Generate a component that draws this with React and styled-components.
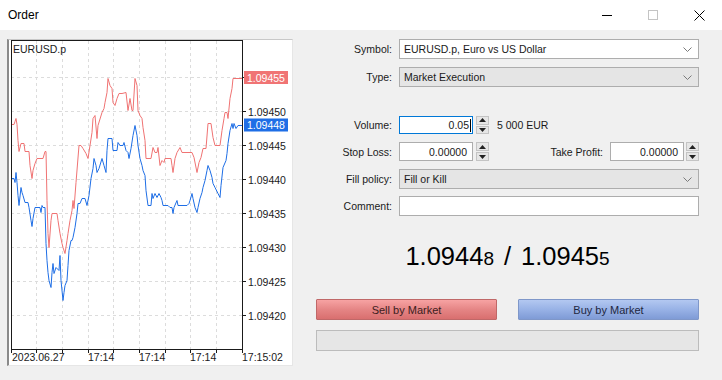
import React from "react";
import styled, { createGlobalStyle } from "styled-components";

const Global = createGlobalStyle`
  html, body { margin: 0; padding: 0; background: #f0f0f0; }
  body { font-family: "Liberation Sans", Arial, sans-serif; }
`;

const Window = styled.div`
  width: 722px;
  height: 380px;
  background: #f0f0f0;
  display: flex;
  flex-direction: column;
  overflow: hidden;
  font-family: "Liberation Sans", Arial, sans-serif;
  font-size: 10.5px;
  color: #1a1a1a;
`;

const TitleBar = styled.div`
  height: 30px;
  background: #ffffff;
  display: flex;
  align-items: center;
  padding-left: 8px;
  flex-shrink: 0;
`;

const Title = styled.div`
  font-size: 12px;
  color: #000;
  flex: 1;
`;

const WinButton = styled.div`
  width: 46px;
  height: 30px;
  display: flex;
  align-items: center;
  justify-content: center;
`;

const Body = styled.div`
  display: flex;
  flex: 1;
  padding: 9px 0 0 7px;
`;

const ChartPanel = styled.div`
  width: 286px;
  height: 327px;
  background: #ffffff;
  box-sizing: border-box;
  border-left: 2px solid #8a8a8a;
  border-top: 1px solid #c8c8c8;
  border-right: 1px solid #e6e6e6;
  border-bottom: 1px solid #e6e6e6;
  flex-shrink: 0;
  overflow: hidden;
`;

const ChartSvg = styled.svg`
  display: block;
  margin-left: -2px;
  margin-top: -1px;
`;

const Side = styled.div`
  display: flex;
  flex-direction: column;
  padding-left: 7px;
`;

const Row = styled.div`
  display: flex;
  align-items: center;
  height: ${(p) => p.$h || 20}px;
  margin-top: ${(p) => p.$mt || 0}px;
`;

const Label = styled.div`
  width: ${(p) => p.$w || 92}px;
  text-align: right;
  margin-right: 7px;
  color: #1a1a1a;
  white-space: nowrap;
`;

const Combo = styled.div`
  width: 300px;
  height: 100%;
  box-sizing: border-box;
  border: 1px solid #adadad;
  background: ${(p) => (p.$gray ? "#e5e5e5" : "#ffffff")};
  display: flex;
  align-items: center;
  padding-left: 4px;
  padding-right: 6px;
`;

const ComboText = styled.div`
  flex: 1;
`;

const TextInput = styled.div`
  width: 300px;
  height: 100%;
  box-sizing: border-box;
  border: 1px solid #adadad;
  background: #fff;
`;

const NumInput = styled.div`
  width: 74px;
  height: 100%;
  box-sizing: border-box;
  border: 1px solid ${(p) => (p.$focus ? "#0078d7" : "#adadad")};
  background: #fff;
  display: flex;
  align-items: center;
  justify-content: flex-end;
  padding-right: ${(p) => (p.$focus ? 1 : 5)}px;
`;

const Caret = styled.span`
  display: inline-block;
  width: 1px;
  height: 13px;
  background: #000;
  margin-left: 1px;
`;

const Spinner = styled.div`
  width: 13px;
  height: 100%;
  margin-left: ${(p) => p.$ml ?? 3}px;
  display: flex;
  flex-direction: column;
  gap: 1px;
`;

const SpinBtn = styled.div`
  flex: 1;
  box-sizing: border-box;
  border: 1px solid #c4c4c4;
  background: #e6e6e6;
  display: flex;
  align-items: center;
  justify-content: center;
`;

const Note = styled.div`
  margin-left: 8px;
`;

const Spacer = styled.div`
  flex: 1;
`;

const Bottom = styled.div`
  margin-left: 16px;
  width: 383px;
  display: flex;
  flex-direction: column;
`;

const Quote = styled.div`
  margin-top: 27px;
  height: 26px;
  display: flex;
  justify-content: center;
  align-items: baseline;
  font-size: 25.5px;
  color: #000;
  line-height: 26px;
`;

const Small = styled.span`
  font-size: 19px;
`;

const Sep = styled.span`
  margin: 0 10px;
`;

const Buttons = styled.div`
  display: flex;
  justify-content: space-between;
  margin-top: 30px;
`;

const MarketButton = styled.div`
  width: 181px;
  height: 21px;
  box-sizing: border-box;
  display: flex;
  align-items: center;
  justify-content: center;
  font-size: 11px;
  border: 1px solid ${(p) => (p.$sell ? "#c06868" : "#7f97c9")};
  background: ${(p) =>
    p.$sell
      ? "linear-gradient(#f7a3a3, #e58585 50%, #d96f6f)"
      : "linear-gradient(#b3c8f1, #98b2e6 50%, #7f9bd6)"};
  color: ${(p) => (p.$sell ? "#3b2020" : "#1f2740")};
  border-radius: 1px;
`;

const Progress = styled.div`
  margin-top: 10px;
  height: 21px;
  box-sizing: border-box;
  border: 1px solid #bcbcbc;
  background: #e6e6e6;
`;

const Chevron = () => (
  <svg width="9" height="5" viewBox="0 0 9 5">
    <polyline points="0.5,0.5 4.5,4.5 8.5,0.5" fill="none" stroke="#7a7a7a" strokeWidth="1" />
  </svg>
);

const Up = () => (
  <svg width="7" height="4" viewBox="0 0 7 4">
    <polygon points="0,4 3.5,0 7,4" fill="#222" />
  </svg>
);
const Down = () => (
  <svg width="7" height="4" viewBox="0 0 7 4">
    <polygon points="0,0 3.5,4 7,0" fill="#222" />
  </svg>
);

const SpinBox = ({ ml }) => (
  <Spinner $ml={ml}>
    <SpinBtn>
      <Up />
    </SpinBtn>
    <SpinBtn>
      <Down />
    </SpinBtn>
  </Spinner>
);

const red = [
  [11,124],[14,124],[15,121],[16,118],[17,124],[18,140],[19,151],[21,143],[24,143],[25,151],[29,151],[30,165],[32,178],[33,170],[35,163],[37,158],[43,158],[45,151],[46,151],[47,200],[48,233],[49,247],[51,220],[52,213],[57,213],[58,220],[60,233],[62,243],[63,247],[65,253],[67,240],[68,233],[70,220],[72,210],[73,200],[74,208],[76,182],[79,145],[81,145],[83,148],[86,153],[88,158],[90,145],[92,132],[93,118],[95,115],[97,138],[98,125],[102,112],[104,108],[105,102],[107,92],[108,78],[110,85],[112,88],[113,102],[115,105],[117,98],[119,93],[122,93],[126,92],[128,110],[130,98],[132,110],[133,110],[135,78],[137,85],[138,110],[140,115],[142,118],[143,127],[145,140],[146,158],[151,158],[153,147],[155,152],[157,152],[158,147],[160,165],[162,160],[164,162],[165,158],[171,158],[172,165],[173,172],[175,158],[177,152],[180,147],[182,152],[192,152],[194,157],[197,172],[199,162],[201,157],[203,148],[206,148],[208,123],[211,123],[213,137],[215,145],[220,145],[222,130],[224,118],[225,112],[227,112],[228,118],[230,98],[232,88],[233,78],[242,78]
];

const blue = [
  [11,178],[14,178],[15,182],[16,172],[17,182],[18,195],[19,205],[21,187],[22,192],[23,195],[25,202],[28,202],[29,207],[31,220],[32,226],[33,218],[35,207],[40,207],[41,212],[42,205],[43,207],[45,207],[46,243],[47,260],[48,272],[49,280],[51,287],[52,272],[53,263],[54,273],[56,267],[59,270],[60,255],[61,280],[63,300],[64,292],[65,285],[67,280],[68,265],[69,250],[71,240],[72,240],[73,237],[75,227],[77,213],[78,203],[80,203],[82,198],[85,198],[87,205],[89,195],[91,178],[93,168],[94,158],[96,165],[97,172],[99,168],[102,158],[104,165],[106,172],[107,150],[108,138],[112,138],[113,150],[117,150],[118,142],[120,145],[123,145],[124,142],[126,150],[128,152],[129,158],[131,148],[133,135],[135,125],[137,135],[138,145],[140,158],[142,165],[143,170],[145,175],[146,190],[148,205],[151,205],[152,193],[153,198],[155,193],[157,197],[159,193],[161,197],[162,200],[163,205],[168,205],[170,207],[172,207],[173,213],[174,207],[177,200],[178,205],[187,205],[189,203],[190,200],[192,193],[193,198],[195,207],[197,212],[198,207],[200,198],[202,192],[203,187],[205,180],[207,170],[208,165],[210,170],[212,177],[213,183],[215,187],[218,193],[220,197],[221,185],[223,167],[226,160],[227,153],[228,143],[230,130],[232,123],[233,128],[234,123],[236,128],[238,125],[242,125]
];

const levels = [
  { p: "1.09450", y: 111.5 },
  { p: "1.09445", y: 145.5 },
  { p: "1.09440", y: 179.5 },
  { p: "1.09435", y: 213.5 },
  { p: "1.09430", y: 247.5 },
  { p: "1.09425", y: 281.5 },
  { p: "1.09420", y: 315.5 },
];
const vx = [36.5, 62.5, 88.5, 113.5, 139.5, 165.5, 190.5, 216.5];
const times = [
  { t: "2023.06.27", x: 12 },
  { t: "17:14", x: 88 },
  { t: "17:14", x: 139 },
  { t: "17:14", x: 190 },
  { t: "17:15:02", x: 242 },
];

const toPts = (a) => a.map(([x, y]) => `${x},${y + 0.5}`).join(" ");

const Chart = () => (
  <ChartSvg width="288" height="328" viewBox="7 39 288 328">
    <g fontFamily="Liberation Sans, Arial, sans-serif" fontSize="10.5" fill="#1a1a1a">
      {[77.5, ...levels.map((l) => l.y)].map((y) => (
        <line key={y} x1="11" x2="242" y1={y} y2={y} stroke="#dcdcdc" strokeDasharray="3 3" />
      ))}
      {vx.map((x) => (
        <line key={x} x1={x} x2={x} y1="41" y2="349" stroke="#dcdcdc" strokeDasharray="3 3" />
      ))}
      <polyline points={toPts(red)} fill="none" stroke="#f07373" strokeWidth="1" />
      <polyline points={toPts(blue)} fill="none" stroke="#1e6ee6" strokeWidth="1" />
      <rect x="11.5" y="40.5" width="231" height="309" fill="none" stroke="#1a1a1a" strokeWidth="1" />
      {[77.5, ...levels.map((l) => l.y)].map((y) => (
        <line key={"t" + y} x1="242" x2="246" y1={y} y2={y} stroke="#1a1a1a" />
      ))}
      {[11.5, ...vx, 242.5].map((x) => (
        <line key={"b" + x} x1={x} x2={x} y1="349" y2="353" stroke="#1a1a1a" />
      ))}
      {levels.map((l) => (
        <text key={l.p} x="248" y={l.y + 4}>{l.p}</text>
      ))}
      <rect x="244" y="71" width="44" height="13" fill="#f07474" />
      <text x="247" y="81.5" fill="#ffffff">1.09455</text>
      <rect x="244" y="118.5" width="44" height="13" fill="#1e6ee6" />
      <text x="247" y="129" fill="#ffffff">1.09448</text>
      {times.map((t, i) => (
        <text key={i} x={t.x} y="361">{t.t}</text>
      ))}
      <text x="13" y="53">EURUSD.p</text>
    </g>
  </ChartSvg>
);

export default function App() {
  return (
    <Window>
      <Global />
      <TitleBar>
        <Title>Order</Title>
        <WinButton>
          <svg width="10" height="10" viewBox="0 0 10 10">
            <line x1="0" x2="10" y1="5.5" y2="5.5" stroke="#000" />
          </svg>
        </WinButton>
        <WinButton>
          <svg width="10" height="10" viewBox="0 0 10 10">
            <rect x="0.5" y="0.5" width="9" height="9" fill="none" stroke="#c4c4c4" />
          </svg>
        </WinButton>
        <WinButton>
          <svg width="11" height="11" viewBox="0 0 11 11">
            <path d="M0.5 0.5 L10.5 10.5 M10.5 0.5 L0.5 10.5" stroke="#000" strokeWidth="1" />
          </svg>
        </WinButton>
      </TitleBar>
      <Body>
        <ChartPanel>
          <Chart />
        </ChartPanel>
        <Side>
          <Row $h={20}>
            <Label>Symbol:</Label>
            <Combo>
              <ComboText>EURUSD.p, Euro vs US Dollar</ComboText>
              <Chevron />
            </Combo>
          </Row>
          <Row $h={20} $mt={8}>
            <Label>Type:</Label>
            <Combo $gray>
              <ComboText>Market Execution</ComboText>
              <Chevron />
            </Combo>
          </Row>
          <Row $h={18} $mt={29}>
            <Label>Volume:</Label>
            <NumInput $focus>
              0.05
              <Caret />
            </NumInput>
            <SpinBox />
            <Note>5 000 EUR</Note>
          </Row>
          <Row $h={19} $mt={8}>
            <Label>Stop Loss:</Label>
            <NumInput>0.00000</NumInput>
            <SpinBox />
            <Spacer />
            <Label $w={60}>Take Profit:</Label>
            <NumInput>0.00000</NumInput>
            <SpinBox ml={2} />
          </Row>
          <Row $h={20} $mt={8}>
            <Label>Fill policy:</Label>
            <Combo $gray>
              <ComboText>Fill or Kill</ComboText>
              <Chevron />
            </Combo>
          </Row>
          <Row $h={20} $mt={7}>
            <Label>Comment:</Label>
            <TextInput />
          </Row>
          <Bottom>
            <Quote>
              1.0944<Small>8</Small>
              <Sep>/</Sep>
              1.0945<Small>5</Small>
            </Quote>
            <Buttons>
              <MarketButton $sell>Sell by Market</MarketButton>
              <MarketButton>Buy by Market</MarketButton>
            </Buttons>
            <Progress />
          </Bottom>
        </Side>
      </Body>
    </Window>
  );
}
